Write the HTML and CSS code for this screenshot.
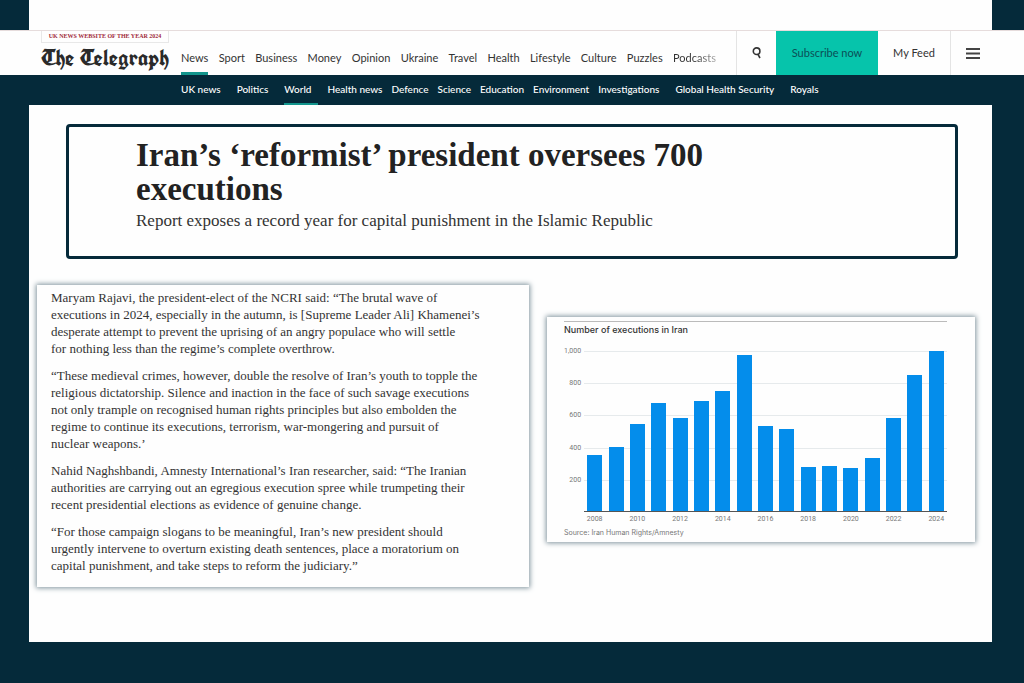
FILE: index.html
```html
<!DOCTYPE html>
<html lang="en">
<head>
<meta charset="utf-8">
<meta name="viewport" content="width=device-width, initial-scale=1">
<title>Iran’s ‘reformist’ president oversees 700 executions</title>
<link rel="stylesheet" href="styles.css">
</head>
<body>
<div class="top-strip"></div>
<header class="masthead">
  <div class="brand">
    <span class="award">UK NEWS WEBSITE OF THE YEAR 2024</span>
    <a class="logo" href="#">The Telegraph</a>
  </div>
  <nav class="main-nav" aria-label="Sections">
    <a class="current" href="#">News</a>
    <a href="#">Sport</a>
    <a href="#">Business</a>
    <a href="#">Money</a>
    <a href="#">Opinion</a>
    <a href="#">Ukraine</a>
    <a href="#">Travel</a>
    <a href="#">Health</a>
    <a href="#">Lifestyle</a>
    <a href="#">Culture</a>
    <a href="#">Puzzles</a>
    <a class="fading" href="#">Podcasts</a>
  </nav>
  <div class="tools">
    <button class="search" type="button" aria-label="Search">
      <svg width="10" height="12" viewBox="0 0 10 12" fill="none" stroke="#333" stroke-width="1.6"><circle cx="4.6" cy="4.2" r="3.3"/><path d="M5.8 7.2 8 11"/></svg>
    </button>
    <a class="subscribe" href="#">Subscribe now</a>
    <a class="feed" href="#">My Feed</a>
    <button class="menu" type="button" aria-label="Menu">
      <svg width="14" height="11" viewBox="0 0 14 11" fill="#444"><path d="M0 0h14v2H0zM0 4.5h14v2H0zM0 9h14v2H0z"/></svg>
    </button>
  </div>
</header>
<nav class="sub-nav" aria-label="News topics">
  <a class="wide" href="#">UK news</a>
  <a class="wide" href="#">Politics</a>
  <a class="wide current" href="#">World</a>
  <a href="#">Health news</a>
  <a href="#">Defence</a>
  <a href="#">Science</a>
  <a href="#">Education</a>
  <a href="#">Environment</a>
  <a class="wide" href="#">Investigations</a>
  <a class="wide" href="#">Global Health Security</a>
  <a href="#">Royals</a>
</nav>
<main class="sheet">
  <section class="headline">
    <h1>Iran’s ‘reformist’ president oversees 700<br>executions</h1>
    <p>Report exposes a record year for capital punishment in the Islamic Republic</p>
  </section>
  <div class="columns">
    <article class="card story">
      <p>Maryam Rajavi, the president-elect of the NCRI said: “The brutal wave of<br>executions in 2024, especially in the autumn, is [Supreme Leader Ali] Khamenei’s<br>desperate attempt to prevent the uprising of an angry populace who will settle<br>for nothing less than the regime’s complete overthrow.</p>
      <p>“These medieval crimes, however, double the resolve of Iran’s youth to topple the<br>religious dictatorship. Silence and inaction in the face of such savage executions<br>not only trample on recognised human rights principles but also embolden the<br>regime to continue its executions, terrorism, war-mongering and pursuit of<br>nuclear weapons.’</p>
      <p>Nahid Naghshbandi, Amnesty International’s Iran researcher, said: “The Iranian<br>authorities are carrying out an egregious execution spree while trumpeting their<br>recent presidential elections as evidence of genuine change.</p>
      <p>“For those campaign slogans to be meaningful, Iran’s new president should<br>urgently intervene to overturn existing death sentences, place a moratorium on<br>capital punishment, and take steps to reform the judiciary.”</p>
    </article>
    <figure class="card chart">
      <figcaption>Number of executions in Iran</figcaption>
      <div class="graph">
        <div class="scale"><span>1,000</span><span>800</span><span>600</span><span>400</span><span>200</span></div>
        <div class="lines"><i></i><i></i><i></i><i></i><i></i></div>
        <div class="bars">
          <b style="height:35%"></b><b style="height:40.2%"></b><b style="height:54.6%"></b><b style="height:67.6%"></b><b style="height:58%"></b><b style="height:68.6%"></b><b style="height:75.3%"></b><b style="height:97.3%"></b><b style="height:53%"></b><b style="height:51.5%"></b><b style="height:27.2%"></b><b style="height:28%"></b><b style="height:26.7%"></b><b style="height:33.3%"></b><b style="height:58.2%"></b><b style="height:85.3%"></b><b style="height:100%"></b>
        </div>
        <div class="years"><span>2008</span><span></span><span>2010</span><span></span><span>2012</span><span></span><span>2014</span><span></span><span>2016</span><span></span><span>2018</span><span></span><span>2020</span><span></span><span>2022</span><span></span><span>2024</span></div>
      </div>
      <p class="source">Source: Iran Human Rights/Amnesty</p>
    </figure>
  </div>
</main>
</body>
</html>
```
FILE: styles.css
```css
* { box-sizing: border-box; }
body {
  margin: 0;
  min-height: 100vh;
  background: #052a3a;
  color: #333;
  font-family: Lato, "Open Sans", sans-serif;
}
a { color: inherit; text-decoration: none; }
button { border: 0; background: none; padding: 0; cursor: pointer; }
h1, p, figure { margin: 0; }

.top-strip { height: 30px; margin: 0 32px 0 29px; background: #fefefe; }

.masthead {
  display: flex;
  height: 45px;
  padding-left: 41px;
  background: #fefefe;
  border-top: 1px solid #e6dcdc;
}
.brand { width: 140px; flex: none; }
.award {
  display: block;
  width: 128px;
  height: 12px;
  border: 1px solid #e8e8e8;
  border-top: 0;
  color: #a22a3a;
  font: bold 6px/11px "Liberation Serif", serif;
  text-align: center;
  white-space: nowrap;
}
.logo {
  display: block;
  color: #2a2a2a;
  font: bold 23px/28px "Old English Text MT", "UnifrakturCook", "Liberation Serif", serif;
  white-space: nowrap;
}
.main-nav {
  flex: 1;
  display: flex;
  justify-content: space-between;
  padding-right: 20px;
  font-size: 11px;
  line-height: 16px;
  white-space: nowrap;
}
.main-nav a { padding-top: 19px; }
.main-nav .current { border-bottom: 3px solid #12958c; }
.fading {
  background: linear-gradient(90deg, #333 50%, #aaa);
  background-clip: text;
  color: transparent;
}
.tools { display: flex; flex: none; font-size: 11px; }
.tools > * { display: flex; align-items: center; justify-content: center; }
.search { width: 40px; border-left: 1px solid #e4e4e4; }
.subscribe { width: 102px; background: #06c4ab; color: #0b4f56; }
.feed { width: 72px; }
.subscribe, .feed { padding-bottom: 2px; }
.menu { width: 74px; padding-right: 29px; border-left: 1px solid #e4e4e4; }

.sub-nav {
  display: flex;
  gap: 9px;
  height: 30px;
  padding-left: 181px;
  color: #fff;
  font-size: 10px;
  font-weight: 500;
  line-height: 28px;
  white-space: nowrap;
}
.sub-nav .wide { padding-right: 7px; }
.sub-nav .current { border-bottom: 2px solid #12958c; }

.sheet {
  margin: 0 32px 41px 29px;
  padding: 19px 17px 55px 8px;
  background: #fefefe;
}
.headline {
  margin: 0 17px 26px 29px;
  padding: 11px 67px 21px;
  border: 3px solid #052a3a;
  border-radius: 4px;
  font-family: "Liberation Serif", serif;
}
.headline h1 {
  color: #222;
  font-size: 33px;
  line-height: 34px;
  white-space: nowrap;
}
.headline p { font-size: 17px; line-height: 28px; padding-top: 1px; white-space: nowrap; }

.columns {
  display: grid;
  grid-template-columns: minmax(0, 492fr) minmax(0, 428fr);
  gap: 18px;
  align-items: start;
}
.card { background: #fefefe; box-shadow: 0 0 5px 1px #7f939c; }
.story {
  padding: 4px 14px 13px;
  font: 13px/17px "Liberation Serif", serif;
  white-space: nowrap;
}
.story p + p { margin-top: 10px; }

.chart { margin-top: 32px; padding: 4px 28px 3px 17px; }
.chart figcaption {
  border-top: 1px solid #bbb;
  font: 500 9px/16px Inter, sans-serif;
}
.graph {
  display: grid;
  grid-template: 161px 12px / 20px 1fr;
  margin-top: 13px;
  color: #777;
  font: 7px/8px Roboto, sans-serif;
}
.scale, .lines { display: grid; grid-template-rows: repeat(5, 1fr); }
.scale span { margin-top: -4px; padding-right: 3px; text-align: right; }
.lines, .bars { grid-area: 1 / 2; }
.lines i { border-top: 1px solid #e6eaec; }
.bars {
  display: grid;
  grid-template-columns: repeat(17, 1fr);
  align-items: end;
  justify-items: center;
  border-bottom: 1px solid #555;
}
.bars b { width: 15px; background: #048deb; }
.years {
  grid-area: 2 / 2;
  display: grid;
  grid-template-columns: repeat(17, 1fr);
  padding-top: 3px;
  text-align: center;
}
.source { padding-top: 3px; color: #777; font: 7px/12px Inter, sans-serif; }
```
